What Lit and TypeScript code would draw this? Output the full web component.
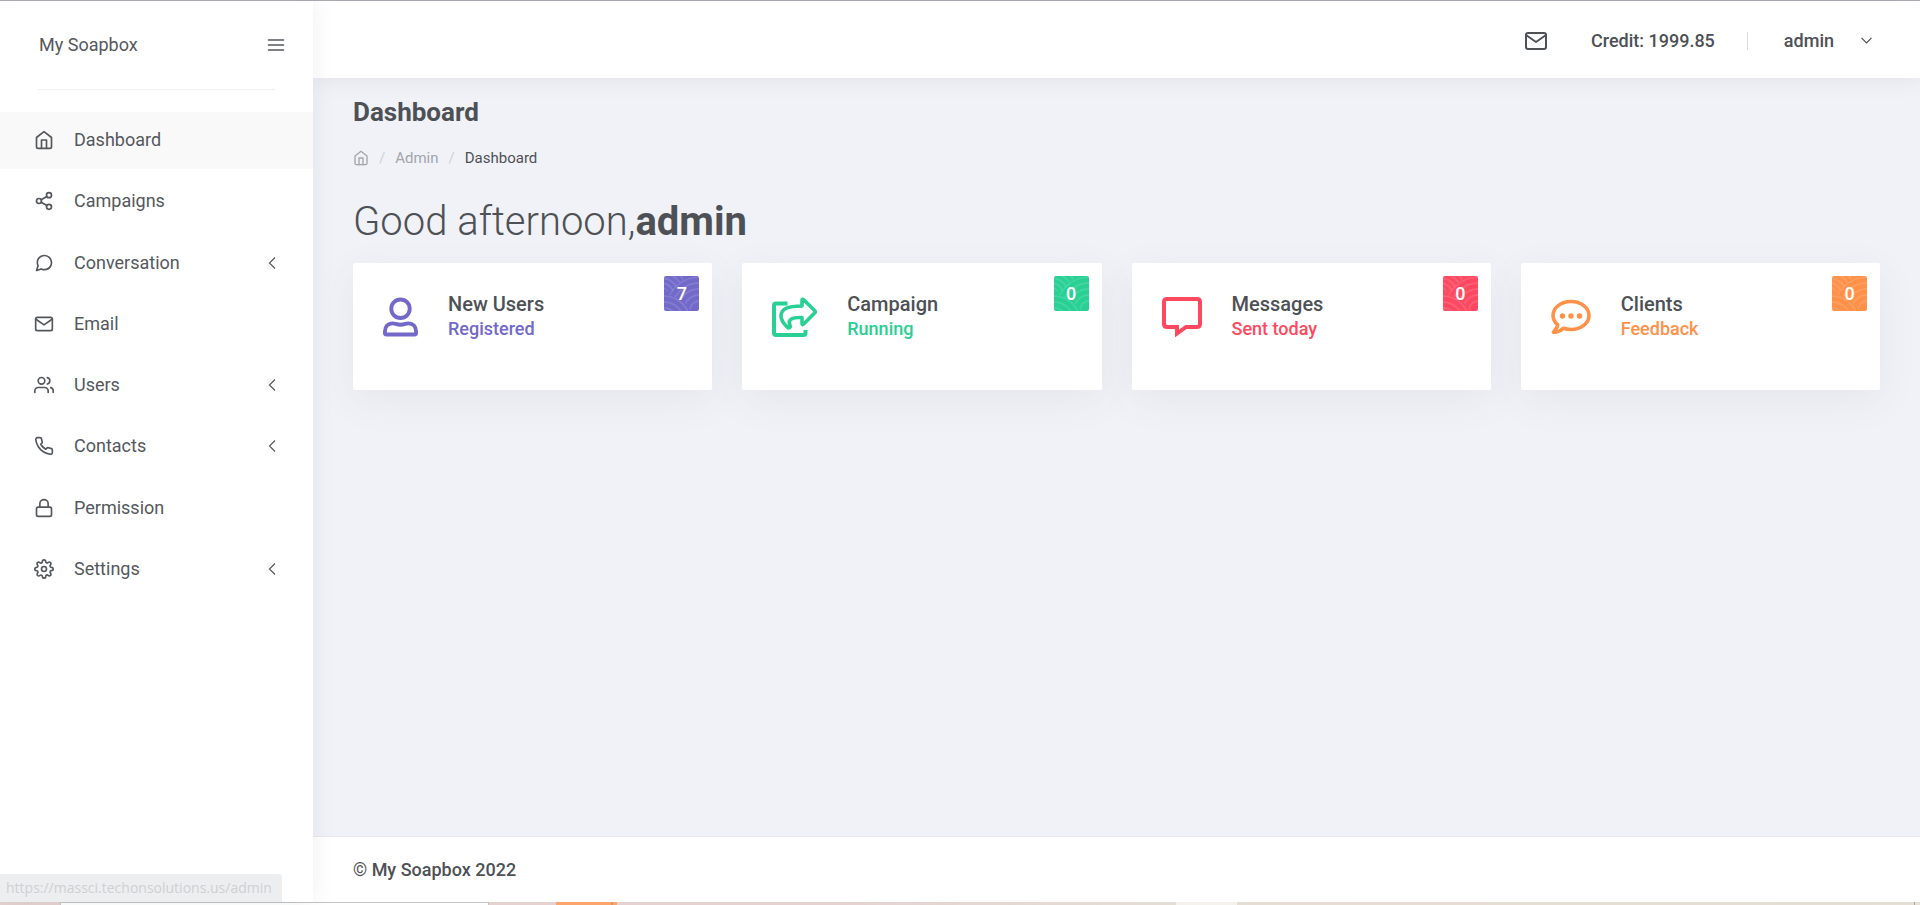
import { LitElement, html, svg, css, nothing } from "lit";
import { customElement, property } from "lit/decorators.js";

const glyphs: Record<string, unknown> = {
  home: svg`<path d="M3 9l9-7 9 7v11a2 2 0 0 1-2 2H5a2 2 0 0 1-2-2z"/><polyline points="9 22 9 12 15 12 15 22"/>`,
  share: svg`<circle cx="18" cy="5" r="3"/><circle cx="6" cy="12" r="3"/><circle cx="18" cy="19" r="3"/><path d="M8.59 13.51l6.83 3.98M15.41 6.51l-6.82 3.98"/>`,
  chat: svg`<path d="M21 11.5a8.38 8.38 0 0 1-.9 3.8 8.5 8.5 0 0 1-7.6 4.7 8.38 8.38 0 0 1-3.8-.9L3 21l1.9-5.7a8.38 8.38 0 0 1-.9-3.8 8.5 8.5 0 0 1 4.7-7.6 8.38 8.38 0 0 1 3.8-.9h.5a8.48 8.48 0 0 1 8 8v.5z"/>`,
  mail: svg`<path d="M4 4h16c1.1 0 2 .9 2 2v12c0 1.100-.9 2-2 2H4c-1.100 0-2-.9-2-2V6c0-1.100.9-2 2-2z"/><polyline points="22,6 12,13 2,6"/>`,
  users: svg`<path d="M17 21v-2a4 4 0 0 0-4-4H5a4 4 0 0 0-4 4v2"/><circle cx="9" cy="7" r="4"/><path d="M23 21v-2a4 4 0 0 0-3-3.870M16 3.130a4 4 0 0 1 0 7.750"/>`,
  phone: svg`<path d="M22 16.920v3a2 2 0 0 1-2.180 2 19.790 19.790 0 0 1-8.630-3.070 19.500 19.500 0 0 1-6-6 19.790 19.790 0 0 1-3.070-8.670A2 2 0 0 1 4.110 2h3a2 2 0 0 1 2 1.720 12.840 12.840 0 0 0 .7 2.810 2 2 0 0 1-.45 2.110L8.090 9.910a16 16 0 0 0 6 6l1.270-1.270a2 2 0 0 1 2.110-.45 12.840 12.840 0 0 0 2.810.7A2 2 0 0 1 22 16.920z"/>`,
  lock: svg`<rect x="3" y="11" width="18" height="11" rx="2"/><path d="M7 11V7a5 5 0 0 1 10 0v4"/>`,
  gear: svg`<circle cx="12" cy="12" r="3"/><path d="M19.4 15a1.650 1.650 0 0 0 .33 1.820l.06.06a2 2 0 0 1 0 2.830 2 2 0 0 1-2.830 0l-.06-.06a1.650 1.650 0 0 0-1.820-.33 1.650 1.650 0 0 0-1 1.510V21a2 2 0 0 1-2 2 2 2 0 0 1-2-2v-.09A1.650 1.650 0 0 0 9 19.400a1.650 1.650 0 0 0-1.820.33l-.06.06a2 2 0 0 1-2.830 0 2 2 0 0 1 0-2.830l.06-.06a1.650 1.650 0 0 0 .33-1.820 1.650 1.650 0 0 0-1.510-1H3a2 2 0 0 1-2-2 2 2 0 0 1 2-2h.09A1.650 1.650 0 0 0 4.600 9a1.650 1.650 0 0 0-.33-1.820l-.06-.06a2 2 0 0 1 0-2.830 2 2 0 0 1 2.830 0l.06.06a1.650 1.650 0 0 0 1.820.33H9a1.650 1.650 0 0 0 1-1.510V3a2 2 0 0 1 2-2 2 2 0 0 1 2 2v.09a1.650 1.650 0 0 0 1 1.510 1.650 1.650 0 0 0 1.820-.33l.06-.06a2 2 0 0 1 2.830 0 2 2 0 0 1 0 2.830l-.06.06a1.650 1.650 0 0 0-.33 1.820V9a1.650 1.650 0 0 0 1.510 1H21a2 2 0 0 1 2 2 2 2 0 0 1-2 2h-.09a1.650 1.650 0 0 0-1.510 1z"/>`,
  menu: svg`<path d="M3 12h18M3 6h18M3 18h18"/>`,
};

const line = (name: string, size: number) => html`<svg
  width=${size} height=${size} viewBox="0 0 24 24" fill="none" stroke="currentColor"
  stroke-width="2" stroke-linecap="round" stroke-linejoin="round" aria-hidden="true"
>${glyphs[name]}</svg>`;

interface NavItem { icon: string; label: string; sub?: boolean; active?: boolean }

const nav: NavItem[] = [
  { icon: "home", label: "Dashboard", active: true },
  { icon: "share", label: "Campaigns" },
  { icon: "chat", label: "Conversation", sub: true },
  { icon: "mail", label: "Email" },
  { icon: "users", label: "Users", sub: true },
  { icon: "phone", label: "Contacts", sub: true },
  { icon: "lock", label: "Permission" },
  { icon: "gear", label: "Settings", sub: true },
];

const art = {
  user: html`<svg width="35" height="40" viewBox="0 0 36 40" fill="none" stroke="currentColor" stroke-width="4" stroke-linejoin="round" aria-hidden="true">
    <circle cx="18" cy="11.500" r="9.500"/>
    <path d="M10 26.500C5 26.500 2 30 2 35v1.500Q2 38 3.500 38h29Q34 38 34 36.500V35c0-5-3-8.500-8-8.500-2.500 0-4 1.500-8 1.500s-5.500-1.500-8-1.500z"/></svg>`,
  send: html`<svg width="45" height="40" viewBox="0 0 45 40" fill="none" stroke="currentColor" stroke-width="3.600" stroke-linejoin="round" aria-hidden="true">
    <path d="M15.500 6.500H4Q2 6.500 2 8.500V36q0 2 2 2h27.500q2 0 2-2v-3" stroke-width="4"/>
    <path d="M30 9V3.500q0-2.200 1.700-.7L42.600 13.500q1.300 1.300 0 2.600L31.700 27q-1.700 1.500-1.700-.7V20.500c-10-.3-14.500 1.500-12 8 .8 2.200-1.200 3.300-2.800 1.500C11.500 26.500 9 23.500 9 19c0-7 6-10 21-10z"/></svg>`,
  message: html`<svg width="40" height="40" viewBox="0 0 40 40" fill="none" stroke="currentColor" stroke-width="4" aria-hidden="true">
    <path d="M5 2h30q3 0 3 3v22q0 3-3 3H24l-9 6.500V30H5q-3 0-3-3V5q0-3 3-3z"/></svg>`,
  feedback: html`<svg width="40" height="40" viewBox="0 0 40 40" fill="none" stroke="currentColor" stroke-width="3.600" stroke-linejoin="round" aria-hidden="true">
    <path d="M20 4.500C10 4.500 2 10.800 2 18.500c0 3.700 1.800 6.800 4.700 9.300C6.300 31 4.500 33 2.500 35.200c3.500.3 7-1.200 9.800-3.900 2.400.7 5 1.200 7.700 1.200 10 0 18-6.300 18-14s-8-14-18-14z"/>
    <g fill="currentColor" stroke="none"><circle cx="11.500" cy="19" r="2.700"/><circle cx="20" cy="19" r="2.700"/><circle cx="28.500" cy="19" r="2.700"/></g></svg>`,
};

const ring = (cx: number, cy: number, radii: number[]) =>
  radii.map((r) => svg`<circle cx=${cx} cy=${cy} r=${r}/>`);

@customElement("stat-card")
class StatCard extends LitElement {
  @property() heading = "";
  @property() note = "";
  @property() count = "0";
  @property() art: keyof typeof art = "user";

  static styles = css`
    :host { display: block; position: relative; min-height: 127px; box-sizing: border-box; padding: 29px 30px; border-radius: 2px; background: #fff; box-shadow: 0 10px 40px rgba(90, 90, 120, 0.07); }
    .row { display: flex; align-items: flex-start; gap: 30px; }
    .art { display: flex; padding-top: 5px; }
    h2, p { margin: 0; font-weight: 500; }
    h2 { font-size: 20px; line-height: 24px; color: #4d5156; }
    p { font-size: 18px; line-height: 26px; }
    .art, p { color: var(--tone); }
    .badge { position: absolute; top: 13px; right: 13px; width: 35px; height: 35px; border-radius: 2px; overflow: hidden; background: var(--tone); color: #fff; display: grid; place-items: center; font-size: 18px; font-weight: 500; line-height: 35px; }
    .badge > * { grid-area: 1 / 1; }
    .badge span { position: relative; }
  `;

  render() {
    return html`
      <div class="row">
        <div class="art">${art[this.art]}</div>
        <div><h2>${this.heading}</h2><p>${this.note}</p></div>
      </div>
      <div class="badge">
        <svg width="35" height="35" viewBox="0 0 35 35" fill="none" stroke="#fff" stroke-opacity="0.12" stroke-width="2" aria-hidden="true">
          <clipPath id="a"><path d="M0 0H24Q14 6 7 17L0 13z"/></clipPath>
          <clipPath id="b"><path d="M5 19Q14 2 35 0v35H27Q20 22 5 19z"/></clipPath>
          <clipPath id="c"><path d="M0 19Q18 20 27 35H0z"/></clipPath>
          <g clip-path="url(#a)">${ring(-3, 20, [8, 13, 18, 23, 28])}</g>
          <g clip-path="url(#b)">${ring(35, 34, [9, 15, 21, 27, 33])}</g>
          <g clip-path="url(#c)">${ring(0, 46, [8, 14, 20, 26])}</g>
        </svg>
        <span>${this.count}</span>
      </div>`;
  }
}

@customElement("app-root")
class AppRoot extends LitElement {
  static styles = css`
    :host { display: flex; flex-direction: column; min-height: 100vh; box-sizing: border-box; border-top: 1px solid #aeadb3; font-family: Roboto, "Liberation Sans", sans-serif; font-size: 18px; line-height: 24px; color: #4d5156; background: #f1f2f7; }
    * { box-sizing: border-box; }
    svg { display: block; flex: none; }
    a { color: inherit; text-decoration: none; }
    button { border: 0; padding: 0; background: none; font: inherit; color: inherit; cursor: pointer; }
    .shell { flex: 1; display: grid; grid-template-columns: 313px minmax(0, 1fr); }
    .side { z-index: 2; position: relative; background: #fff; box-shadow: 0 0 21px rgba(89, 102, 122, 0.1); }
    .brand { display: flex; align-items: center; justify-content: space-between; height: 88px; padding: 0 27px 1px 39px; color: #54585d; }
    .rule { height: 1px; margin: 0 38px; background: #f0f0f1; }
    .brand-box { padding-bottom: 22px; }
    .list { list-style: none; margin: 0; padding: 0; display: grid; grid-template-rows: repeat(8, 1fr); min-height: 490px; }
    .item { display: flex; align-items: center; height: 57px; padding: 0 37px 1px 34px; gap: 20px; color: #54585d; }
    .item.active { background: #f9f9f9; }
    .item span { flex: 1; }
    .main { display: flex; flex-direction: column; min-width: 0; }
    .top { display: flex; align-items: center; justify-content: flex-end; height: 77px; padding: 2px 48px 0 40px; background: #fff; font-weight: 500; box-shadow: 0 0 21px rgba(89, 102, 122, 0.12); }
    .credit { margin-left: 43px; padding-right: 32px; }
    .user { display: flex; align-items: center; gap: 27px; }
    .bar { width: 1px; height: 18px; margin-right: 36px; background: #dcdcde; }
    .content { flex: 1; padding: 17px 40px 40px; }
    h1 { margin: 0; font-size: 26px; line-height: 34px; font-weight: 700; }
    .crumbs { display: flex; align-items: center; list-style: none; margin: 19px 0 0; padding: 0; gap: 10px; font-size: 15px; line-height: 20px; }
    .crumbs .muted { color: #a3a5a9; }
    .crumbs .sep { color: #cfd1d5; }
    .hello { margin: 19px 0 6px; font-size: 40px; line-height: 70px; font-weight: 300; }
    .hello b { font-weight: 700; }
    .cards { display: grid; grid-template-columns: repeat(4, minmax(0, 1fr)); gap: 30px; }
    .violet { --tone: #7269c9; }
    .green { --tone: #28d094; }
    .red { --tone: #ff4961; }
    .orange { --tone: #ff9149; }
    .foot { height: 66px; padding: 21px 40px 20px; border-top: 1px solid #e6e7ec; background: #fff; font-weight: 500; }
    .foot span { font-weight: 400; }
    .status { position: absolute; z-index: 3; left: 0; bottom: 0; height: 28px; padding: 2px 10px 0 6px; border-radius: 0 4px 0 0; background: #edeef0; color: #cfd0d2; font-family: "Open Sans", "Noto Sans", sans-serif; font-size: 14px; font-weight: 400; line-height: 24px; white-space: nowrap; }
    .strip { display: flex; height: 3px; background: linear-gradient(90deg, #e5d2d0 0 44%, #e4ddd5 60%, #e8ddd3 70%, #e5dfd5); }
    .gap-a { width: 60px; }
    .pane { width: 429px; border: 1px solid #c4c4c6; border-bottom: 0; background: #fff; }
    .tab { width: 61px; margin-left: 67px; background: linear-gradient(90deg, #fba56c 0 55px, #e59558 55px 57px, #fba56c 57px); }
    .light { width: 61px; margin-left: 559px; background: #f5f2ee; }
    .edge { width: 1px; margin-left: auto; margin-right: 5px; background: #aaa79f; }
  `;

  render() {
    return html`
      <div class="shell">
        <aside class="side">
          <div class="brand-box">
            <div class="brand">
              <a href="#">My Soapbox</a>
              <button aria-label="Toggle menu">${line("menu", 20)}</button>
            </div>
            <div class="rule"></div>
          </div>
          <nav>
            <ul class="list">
              ${nav.map((n) => html`<li>
                <a class="item ${n.active ? "active" : ""}" href="#">
                  ${line(n.icon, 20)}<span>${n.label}</span>
                  ${n.sub ? html`<svg width="8" height="12" viewBox="0 0 8 12" fill="none" stroke="currentColor" stroke-width="1.200" aria-hidden="true"><path d="M7 .5L1.500 6 7 11.500"/></svg>` : nothing}
                </a></li>`)}
            </ul>
          </nav>
          <div class="status">https://massci.techonsolutions.us/admin</div>
        </aside>
        <div class="main">
          <header class="top">
            <button aria-label="Messages">${line("mail", 24)}</button>
            <span class="credit">Credit: 1999.85</span>
            <span class="bar"></span>
            <button class="user">admin
              <svg width="11" height="7" viewBox="0 0 11 7" fill="none" stroke="currentColor" stroke-width="1.200" aria-hidden="true"><path d="M.5 .8L5.500 5.800 10.500 .8"/></svg>
            </button>
          </header>
          <main class="content">
            <h1>Dashboard</h1>
            <ol class="crumbs">
              <li class="muted"><a href="#" aria-label="Home">${line("home", 16)}</a></li>
              <li class="sep" aria-hidden="true">/</li>
              <li class="muted"><a href="#">Admin</a></li>
              <li class="sep" aria-hidden="true">/</li>
              <li>Dashboard</li>
            </ol>
            <p class="hello">Good afternoon,<b>admin</b></p>
            <section class="cards">
              <stat-card class="violet" heading="New Users" note="Registered" count="7" art="user"></stat-card>
              <stat-card class="green" heading="Campaign" note="Running" count="0" art="send"></stat-card>
              <stat-card class="red" heading="Messages" note="Sent today" count="0" art="message"></stat-card>
              <stat-card class="orange" heading="Clients" note="Feedback" count="0" art="feedback"></stat-card>
            </section>
          </main>
          <footer class="foot"><span>©</span> My Soapbox 2022</footer>
        </div>
      </div>
      <div class="strip">
        <i class="gap-a"></i><i class="pane"></i><i class="tab"></i><i class="light"></i><i class="edge"></i>
      </div>`;
  }
}
